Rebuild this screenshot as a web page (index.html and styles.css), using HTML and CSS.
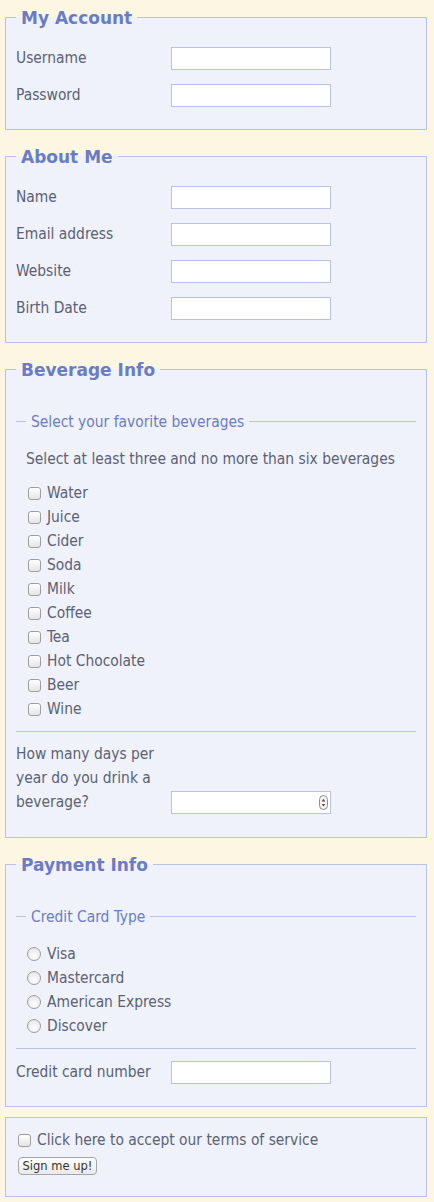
FILE: index.html
```html
<!DOCTYPE html>
<html>
<head>
<meta charset="utf-8">
<title>Sign up</title>
<link rel="stylesheet" href="styles.css">
</head>
<body>
<form class="form">
  <fieldset class="box">
    <legend>My Account</legend>
    <div class="row"><label class="lbl">Username</label><input class="txt" type="text"></div>
    <div class="row"><label class="lbl">Password</label><input class="txt" type="password"></div>
  </fieldset>

  <fieldset class="box">
    <legend>About Me</legend>
    <div class="row"><label class="lbl">Name</label><input class="txt" type="text"></div>
    <div class="row"><label class="lbl">Email address</label><input class="txt" type="text"></div>
    <div class="row"><label class="lbl">Website</label><input class="txt" type="text"></div>
    <div class="row"><label class="lbl">Birth Date</label><input class="txt" type="text"></div>
  </fieldset>

  <fieldset class="box bev">
    <legend>Beverage Info</legend>
    <fieldset class="sub">
      <legend>Select your favorite beverages</legend>
      <p class="hint">Select at least three and no more than six beverages</p>
      <label class="opt"><input class="cb" type="checkbox">Water</label>
      <label class="opt"><input class="cb" type="checkbox">Juice</label>
      <label class="opt"><input class="cb" type="checkbox">Cider</label>
      <label class="opt"><input class="cb" type="checkbox">Soda</label>
      <label class="opt"><input class="cb" type="checkbox">Milk</label>
      <label class="opt"><input class="cb" type="checkbox">Coffee</label>
      <label class="opt"><input class="cb" type="checkbox">Tea</label>
      <label class="opt"><input class="cb" type="checkbox">Hot Chocolate</label>
      <label class="opt"><input class="cb" type="checkbox">Beer</label>
      <label class="opt"><input class="cb" type="checkbox">Wine</label>
    </fieldset>
    <div class="row days">
      <label class="lbl multi">How many days per year do you drink a beverage?</label>
      <span class="num"><input class="txt" type="text"><span class="spin"><svg width="10" height="16" viewBox="0 0 10 16"><rect x="0.5" y="0.5" width="8" height="14" rx="4" fill="#f4f4f4" stroke="#8e8e8e"/><path d="M2.6 6.4 L4.5 3.8 L6.4 6.4 Z" fill="#555"/><path d="M2.6 9 L4.5 11.6 L6.4 9 Z" fill="#555"/></svg></span></span>
    </div>
  </fieldset>

  <fieldset class="box">
    <legend>Payment Info</legend>
    <fieldset class="sub radios">
      <legend>Credit Card Type</legend>
      <label class="opt"><input class="rb" type="radio" name="cc">Visa</label>
      <label class="opt"><input class="rb" type="radio" name="cc">Mastercard</label>
      <label class="opt"><input class="rb" type="radio" name="cc">American Express</label>
      <label class="opt"><input class="rb" type="radio" name="cc">Discover</label>
    </fieldset>
    <div class="row card"><label class="lbl">Credit card number</label><input class="txt" type="text"></div>
  </fieldset>

  <fieldset class="box terms">
    <label class="agree"><input class="cb" type="checkbox">Click here to accept our terms of service</label>
    <button class="btn" type="button">Sign me up!</button>
  </fieldset>
</form>
</body>
</html>
```
FILE: styles.css
```css
html, body {
  margin: 0;
  background: #fdf6e3;
}
body {
  padding: 6px 7px 6px 5px;
  font-family: "DejaVu Sans Condensed", "DejaVu Sans", Verdana, sans-serif;
  font-size: 15.4px;
  color: #5a6175;
}
.form {
  margin: 0;
}
.box {
  margin: 0;
  padding: 19px 10px 22px;
  border: 1px solid #b9c1ea;
  background: #f0f2fb;
  min-width: 0;
}
.box + .box {
  margin-top: 15px;
}
.box.bev {
  padding-bottom: 23px;
}
.box > legend {
  padding: 2px 5px 0;
  font-family: "DejaVu Sans", Verdana, sans-serif;
  font-size: 17px;
  font-weight: bold;
  line-height: 20px;
  color: #6a7cc4;
}
.row {
  display: flex;
  align-items: center;
  height: 23px;
}
.row + .row {
  margin-top: 14px;
}
.lbl {
  width: 155px;
  flex: none;
  line-height: 24px;
  margin-top: -1px;
}
.txt {
  box-sizing: border-box;
  width: 160px;
  height: 23px;
  margin: 0;
  padding: 2px 4px;
  border: 1px solid #b9c1ea;
  background: #fff;
  font: 13px "DejaVu Sans", sans-serif;
  outline: none;
}
.sub {
  margin: 12px 0 0;
  padding: 16px 10px 10px;
  border: 0;
  border-top: 1px solid #b9c1ea;
  border-bottom: 1px solid #b9c1ea;
  background: transparent;
  min-width: 0;
}
.sub > legend {
  padding: 2px 5px 0;
  font-size: 15.4px;
  font-weight: normal;
  line-height: 18px;
  color: #6a7cc4;
}
.hint {
  margin: 0 0 10px;
  line-height: 24px;
}
.opt {
  display: flex;
  align-items: center;
  height: 24px;
}
.cb {
  appearance: none;
  -webkit-appearance: none;
  box-sizing: border-box;
  width: 13px;
  height: 13px;
  margin: 0 6px 0 2px;
  border: 1px solid #9e9e9e;
  border-radius: 3px;
  background: linear-gradient(#ffffff, #e4e4e4);
  flex: none;
}
.rb {
  appearance: none;
  -webkit-appearance: none;
  box-sizing: border-box;
  width: 14px;
  height: 14px;
  margin: 0 6px 0 1px;
  border: 1px solid #9a9a9a;
  border-radius: 50%;
  background: radial-gradient(circle at 50% 70%, #ffffff, #e2e2e2);
  flex: none;
}
.days {
  height: auto;
  align-items: flex-end;
  margin-top: 10px;
}
.multi {
  display: block;
  margin-top: 0;
}
.num {
  position: relative;
  display: inline-block;
  height: 23px;
}
.num .txt {
  display: block;
}
.spin {
  position: absolute;
  right: 2px;
  top: 4px;
  width: 10px;
  height: 16px;
  line-height: 0;
}
.card {
  margin-top: 12px;
}
.box.terms {
  margin-top: 10px;
  padding: 10px 12px 21px;
}
.agree {
  display: flex;
  align-items: center;
  height: 24px;
}
.agree .cb {
  margin: 0 6px 0 0;
}
.btn {
  display: block;
  box-sizing: border-box;
  margin-top: 5px;
  width: 79px;
  height: 18px;
  padding: 0;
  border: 1px solid #a6a6a6;
  border-radius: 4px;
  background: linear-gradient(#ffffff, #e9e9e9);
  color: #333;
  font: 11.5px "DejaVu Sans", sans-serif;
  line-height: 16px;
}
```
